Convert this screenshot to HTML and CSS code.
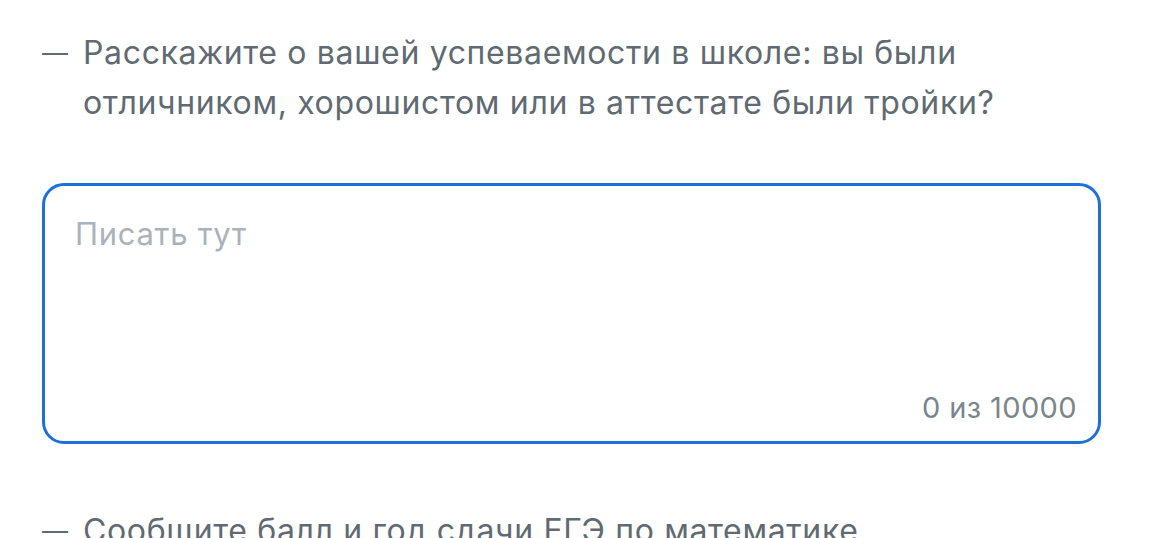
FILE: index.html
```html
<!DOCTYPE html>
<html lang="ru">
<head>
<meta charset="utf-8">
<link rel="stylesheet" href="styles.css">
</head>
<body>
<div class="page">
  <div class="question">
    <span class="dash">—</span>
    <p class="qtext">Расскажите о вашей успеваемости в школе: вы были отличником, хорошистом или в аттестате были тройки?</p>
  </div>
  <div class="field">
    <div class="placeholder">Писать тут</div>
    <div class="counter">0 из 10000</div>
  </div>
  <div class="question next">
    <span class="dash">—</span>
    <p class="qtext">Сообщите балл и год сдачи ЕГЭ по математике</p>
  </div>
</div>
</body>
</html>
```
FILE: styles.css
```css
html, body {
  margin: 0;
  padding: 0;
  background: #ffffff;
}
body {
  font-family: Inter, "Noto Sans", sans-serif;
  color: #5f6a72;
  height: 538px;
  overflow: hidden;
}
.page {
  padding: 28px 51px 0 42px;
}
.question {
  display: flex;
  align-items: flex-start;
  font-size: 32px;
  line-height: 50px;
  letter-spacing: 0.65px;
}
.dash {
  flex: none;
  width: 41px;
  font-size: 26px;
  letter-spacing: 0;
}
.qtext {
  margin: 0;
  max-width: 1010px;
}
.field {
  margin-top: 55px;
  height: 255px;
  border: 3px solid #1d6fd9;
  border-radius: 22px;
  padding: 0 21px 0 30px;
  display: flex;
  flex-direction: column;
  justify-content: space-between;
}
.placeholder {
  padding-top: 31px;
  font-size: 31px;
  line-height: 34px;
  letter-spacing: 0.7px;
  color: #a9b3ba;
}
.counter {
  align-self: flex-end;
  padding-bottom: 16px;
  font-size: 29px;
  line-height: 34px;
  letter-spacing: 0.4px;
  color: #7b858c;
}
.next {
  margin-top: 62px;
}
```
